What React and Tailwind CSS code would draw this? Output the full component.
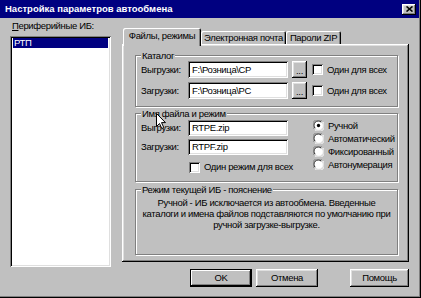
const bevelOut =
  "shadow-[inset_-1px_-1px_0_#000000,inset_1px_1px_0_#ffffff,inset_-2px_-2px_0_#808080,inset_2px_2px_0_#dfdfdf]";
const bevelIn =
  "shadow-[inset_1px_1px_0_#808080,inset_-1px_-1px_0_#ffffff,inset_2px_2px_0_#000000,inset_-2px_-2px_0_#dfdfdf]";
const tabEdge =
  "shadow-[inset_1px_1px_0_#ffffff,inset_-1px_0_0_#000000,inset_-2px_0_0_#808080]";

function Checkbox() {
  return <div className={`w-[11px] h-[11px] shrink-0 bg-white ${bevelIn}`} />;
}

function Radio({ checked }) {
  return (
    <svg width="11" height="11" viewBox="0 0 12 12" className="shrink-0">
      <circle cx="6" cy="6" r="5.5" fill="#ffffff" />
      <path d="M1.2 9.8 A5.4 5.4 0 0 1 9.8 1.2" stroke="#808080" strokeWidth="1" fill="none" />
      <path d="M2.4 9 A4.3 4.3 0 0 1 9 2.4" stroke="#000000" strokeWidth="1" fill="none" />
      <path d="M10.8 2.2 A5.4 5.4 0 0 1 2.2 10.8" stroke="#ffffff" strokeWidth="1" fill="none" />
      <path d="M9.8 3 A4.3 4.3 0 0 1 3 9.8" stroke="#dfdfdf" strokeWidth="1" fill="none" />
      {checked && <circle cx="6" cy="6" r="1.8" fill="#000000" />}
    </svg>
  );
}

function Field({ value, className = "" }) {
  return (
    <div className={`w-[100px] bg-white pl-[4px] flex items-center ${bevelIn} ${className}`}>
      {value}
    </div>
  );
}

function Group({ title, className = "", children }) {
  return (
    <fieldset
      className={`border border-[#808080] shadow-[inset_1px_1px_0_#ffffff,1px_1px_0_#ffffff] ${className}`}
    >
      <legend className="ml-[5px] px-[1px] bg-[#c0c0c0] leading-[11px]">{title}</legend>
      {children}
    </fieldset>
  );
}

function Button({ label, primary, width }) {
  return (
    <div
      className={`h-[18px] flex items-center justify-center ${width} ${
        primary
          ? "border border-black shadow-[inset_-1px_-1px_0_#000000,inset_1px_1px_0_#ffffff,inset_-2px_-2px_0_#808080]"
          : bevelOut
      }`}
    >
      {label}
    </div>
  );
}

export default function App() {
  return (
    <div className="relative w-[421px] h-[298px] overflow-hidden bg-[#c0c0c0] flex flex-col font-['Liberation_Sans',Arial,sans-serif] text-[9.5px] tracking-[-0.35px] leading-[12px] text-black shadow-[inset_-1px_-1px_0_#000000,inset_-2px_-2px_0_#808080]">
      {/* заголовок окна */}
      <div className="h-[18px] mr-[2px] bg-[#000080] flex items-center pl-[5px] pr-[3px] text-white font-bold text-[9.5px] tracking-[0px]">
        <span className="flex-1">Настройка параметров автообмена</span>
        <div className={`w-[14px] h-[11px] bg-[#c0c0c0] flex items-center justify-center ${bevelOut}`}>
          <svg width="7" height="6" viewBox="0 0 7 6">
            <path d="M0.5 0.5 L6.5 5.5 M6.5 0.5 L0.5 5.5" stroke="#000" strokeWidth="1.6" />
          </svg>
        </div>
      </div>

      <div className="flex flex-1">
        {/* список ИБ */}
        <div className="ml-[10px] w-[101px] flex flex-col">
          <div className="mt-[2px] pl-[2px]">
            <span className="underline">П</span>ериферийные ИБ:
          </div>
          <div className={`mt-[4px] h-[231px] bg-white p-[2px] ${bevelIn}`}>
            <div className="ml-[1px] mr-[1px] h-[10px] bg-[#000080] text-white leading-[10px] pl-[1px]">
              РТП
            </div>
          </div>
        </div>

        {/* вкладки */}
        <div className="ml-[11px] w-[287px] flex flex-col">
          <div className="mt-[10px] h-[16px] flex items-start whitespace-nowrap">
            <div className={`relative z-10 ml-[1px] w-[78px] h-[18px] bg-[#c0c0c0] rounded-t-[2px] flex items-start justify-center pt-[2px] ${tabEdge}`}>
              Файлы, режимы
            </div>
            <div className={`mt-[3px] w-[85px] h-[13px] rounded-t-[2px] flex items-center justify-center ${tabEdge}`}>
              Электронная почта
            </div>
            <div className={`mt-[3px] w-[55px] h-[13px] rounded-t-[2px] flex items-center justify-center ${tabEdge}`}>
              Пароли ZIP
            </div>
          </div>

          <div className={`h-[218px] flex flex-col pt-[6px] pl-[13px] pr-[11px] ${bevelOut}`}>
            <Group title="Каталог" className="h-[57px]">
              <div className="pl-[5px] flex flex-col gap-[4px]">
                {[
                  ["Выгрузки:", "F:\\Розница\\CP"],
                  ["Загрузки:", "F:\\Розница\\PC"],
                ].map(([label, path]) => (
                  <div key={label} className="flex items-center h-[17px]">
                    <span className="w-[47px]">{label}</span>
                    <Field value={path} className="h-[17px]" />
                    <div className={`ml-[4px] w-[15px] h-[17px] flex items-end justify-center pb-[3px] leading-[8px] ${bevelOut}`}>
                      ...
                    </div>
                    <div className="ml-[5px]">
                      <Checkbox />
                    </div>
                    <span className="ml-[4px]">Один для всех</span>
                  </div>
                ))}
              </div>
            </Group>

            <Group title="Имя файла и режим" className="mt-[1px] h-[74px]">
              <div className="pl-[5px] flex">
                <div className="flex flex-col">
                  <div className="flex items-center h-[16px] mt-[1px]">
                    <span className="w-[47px]">Выгрузки:</span>
                    <Field value="RTPE.zip" className="h-[16px]" />
                  </div>
                  <div className="flex items-center h-[16px] mt-[3px]">
                    <span className="w-[47px]">Загрузки:</span>
                    <Field value="RTPF.zip" className="h-[16px]" />
                  </div>
                  <div className="flex items-center mt-[6px] pl-[48px] gap-[4px] whitespace-nowrap">
                    <Checkbox />
                    <span>Один режим для всех</span>
                  </div>
                </div>
                <div className="ml-[20px] flex flex-col">
                  {[
                    ["Ручной", true],
                    ["Автоматический", false],
                    ["Фиксированный", false],
                    ["Автонумерация", false],
                  ].map(([label, checked]) => (
                    <div key={label} className="h-[13px] flex items-center gap-[4px]">
                      <Radio checked={checked} />
                      <span>{label}</span>
                    </div>
                  ))}
                </div>
              </div>
            </Group>

            <Group title="Режим текущей ИБ - пояснение" className="mt-[2px] h-[71px]">
              <p className="mt-[2px] text-center leading-[11px] whitespace-nowrap">
                Ручной - ИБ исключается из автообмена. Введенные
                <br />
                каталоги и имена файлов подставляются по умолчанию при
                <br />
                ручной загрузке-выгрузке.
              </p>
            </Group>
          </div>

          <div className="mt-[7px] flex justify-end">
            <Button label="OK" primary width="w-[62px]" />
            <div className="ml-[4px]">
              <Button label="Отмена" width="w-[62px]" />
            </div>
            <div className="ml-[32px]">
              <Button label="Помощь" width="w-[59px]" />
            </div>
          </div>
        </div>
      </div>

      {/* курсор мыши */}
      <svg width="11" height="17" viewBox="0 0 11 17" className="absolute left-[156px] top-[113px]">
        <path
          d="M0.5 0.5 L0.5 13.5 L3.5 10.5 L5.8 15.5 L7.8 14.6 L5.5 9.6 L9.5 9.6 Z"
          fill="#ffffff"
          stroke="#000000"
          strokeWidth="1"
        />
      </svg>
    </div>
  );
}
